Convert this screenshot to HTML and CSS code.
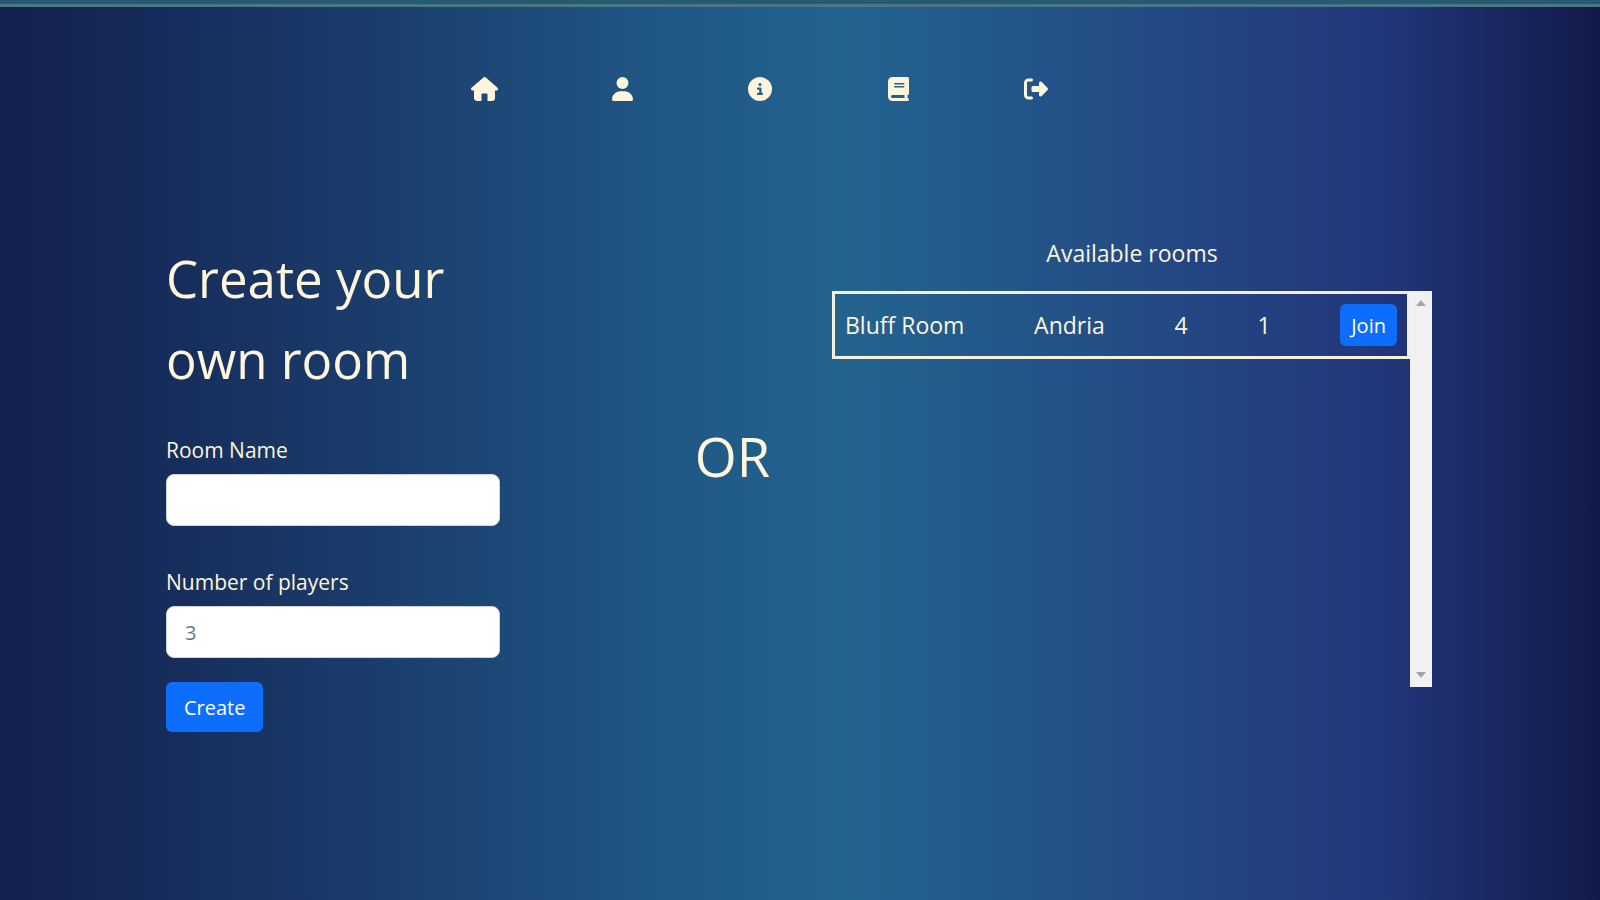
FILE: index.html
```
<!DOCTYPE html>
<html lang="en">

<head>
    <meta charset="UTF-8">
    <meta name="viewport" content="width=device-width, initial-scale=1.0">
    <title>Rooms</title>
    <link rel="stylesheet" href="styles.css">
</head>

<body>
    <div class="topline"></div>
    <nav>
        <a href="#home" aria-label="Home">
            <svg viewBox="0 0 576 512"><path d="M575.8 255.5c0 18-15 32.100-32 32.100h-32l.7 160.200c0 35.300-28.700 64.200-64 64.200H352V376c0-13-11-24-24-24h-80c-13 0-24 11-24 24v136H128c-35 0-64-29-64-64V287.600H32c-18 0-32-14-32-32.100 0-9 3-17 10-24L266.400 8c7-7 15-8 22-8s15 2 21 7L564.800 231.500c8 7 12 15 11 24z"/></svg>
        </a>
        <a href="#profile" aria-label="Profile">
            <svg viewBox="0 0 448 512"><path d="M224 256a128 128 0 1 0 0-256 128 128 0 1 0 0 256zM178 304C79 304 0 383 0 482c0 17 13 30 30 30h388c17 0 30-13 30-30 0-99-79-178-178-178z"/></svg>
        </a>
        <a href="#info" aria-label="Info">
            <svg viewBox="0 0 512 512"><path fill-rule="evenodd" d="M256 512a256 256 0 1 0 0-512 256 256 0 1 0 0 512zM216 336h24v-64h-24c-13 0-24-11-24-24s11-24 24-24h48c13 0 24 11 24 24v88h8c13 0 24 11 24 24s-11 24-24 24h-80c-13 0-24-11-24-24s11-24 24-24zm40-208a32 32 0 1 1 0 64 32 32 0 1 1 0-64z"/></svg>
        </a>
        <a href="#rules" aria-label="Rules">
            <svg viewBox="0 0 448 512"><path fill-rule="evenodd" d="M96 0C43 0 0 43 0 96v320c0 53 43 96 96 96h320c18 0 32-14 32-32s-14-32-32-32v-64c18 0 32-14 32-32V32c0-18-14-32-32-32H96zm0 384h256v64H96c-18 0-32-14-32-32s14-32 32-32zm32-240c0-9 7-16 16-16h192c9 0 16 7 16 16s-7 16-16 16H144c-9 0-16-7-16-16zm16 48h192c9 0 16 7 16 16s-7 16-16 16H144c-9 0-16-7-16-16s7-16 16-16z"/></svg>
        </a>
        <a href="#logout" aria-label="Log out">
            <svg viewBox="0 0 512 512"><path d="M378 105l121 122c8 8 13 18 13 29s-5 21-13 29L378 407c-6 6-15 10-24 10-19 0-34-15-34-34v-63H192c-18 0-32-14-32-32v-64c0-18 14-32 32-32h128v-63c0-19 15-34 34-34 9 0 18 4 24 10zM160 96H96c-18 0-32 14-32 32v256c0 18 14 32 32 32h64c18 0 32 14 32 32s-14 32-32 32H96c-53 0-96-43-96-96V128c0-53 43-96 96-96h64c18 0 32 14 32 32s-14 32-32 32z"/></svg>
        </a>
    </nav>
    <main>
        <form class="create">
            <h1>Create your own room</h1>
            <div class="group">
                <label for="roomName">Room Name</label>
                <input type="text" id="roomName">
            </div>
            <div class="group">
                <label for="players">Number of players</label>
                <input type="text" id="players" placeholder="3">
            </div>
            <button type="button">Create</button>
        </form>
        <p class="or">OR</p>
        <section class="rooms">
            <h2>Available rooms</h2>
            <div class="list">
                <table>
                    <tbody>
                        <tr>
                            <td>Bluff Room</td>
                            <td>Andria</td>
                            <td>4</td>
                            <td>1</td>
                            <td><button type="button" class="join">Join</button></td>
                        </tr>
                    </tbody>
                </table>
                <!-- Scroll track -->
                <div class="track">
                    <svg viewBox="0 0 10 6"><path d="M0 6L5 0l5 6z"/></svg>
                    <svg viewBox="0 0 10 6"><path d="M0 0l5 6 5-6z"/></svg>
                </div>
            </div>
        </section>
    </main>
</body>

</html>
```
FILE: styles.css
```
* {
    box-sizing: border-box;
}

body {
    margin: 0;
    min-height: 100vh;
    color: #fdf5dc;
    font-family: "Segoe UI", "Open Sans", sans-serif;
    font-size: 21px;
    background: linear-gradient(90deg, #14204e 0%, #1a3c6b 23%, #205583 40%, #23648f 53%, #235589 64%, #23377c 86%, #121a48 100%);
}

.topline {
    height: 7px;
    background-color: #275a70;
    border-bottom: 3px solid #4a7787;
}

nav {
    display: flex;
    justify-content: center;
    gap: 110px;
    padding: 70px 80px 0 0;
}

nav a {
    display: flex;
    justify-content: center;
    width: 28px;
    height: 24px;
}

nav svg {
    height: 100%;
    fill: #fdf5dc;
}

main {
    display: grid;
    grid-template-columns: 334fr 332fr 600fr;
    padding: 134px 168px 0 166px;
}

h1,
h2,
p {
    margin: 0;
    font-weight: 400;
}

/* Create form */
h1 {
    font-size: 51px;
    line-height: 81px;
    margin-bottom: 34px;
}

.group {
    margin-bottom: 40px;
}

.group + .group {
    margin-bottom: 24px;
}

label {
    display: block;
    line-height: 32px;
    margin-bottom: 8px;
}

input {
    display: block;
    width: 100%;
    height: 52px;
    padding: 0 18px;
    border: 1px solid #ced4da;
    border-radius: 8px;
    background-color: #fff;
    font: inherit;
    font-size: 20px;
}

input::placeholder {
    color: #6c757d;
    opacity: 1;
}

button {
    height: 50px;
    padding: 0 18px;
    border: 0;
    border-radius: 6px;
    color: #fff;
    background-color: #0d6efd;
    font: inherit;
    font-size: 20px;
    cursor: pointer;
}

.or {
    padding: 181px 62px 0 0;
    font-size: 54px;
    line-height: 81px;
    text-align: right;
}

.create {
    padding-top: 3px;
}

/* Rooms */
.rooms {
    font-size: 23px;
}

h2 {
    font-size: 23px;
    line-height: 36px;
    margin-bottom: 20px;
    text-align: center;
}

.list {
    display: flex;
    align-items: flex-start;
    height: 396px;
}

table {
    flex: 1;
    display: block;
    border: 3px solid #f4f0dc;
}

tbody {
    display: block;
}

tr {
    display: flex;
    justify-content: space-between;
    align-items: center;
    height: 62px;
    padding: 0 10px;
}

td {
    padding: 0;
}

.join {
    display: block;
    height: 42px;
    padding: 0 11px;
}

.track {
    display: flex;
    flex-direction: column;
    justify-content: space-between;
    align-items: center;
    width: 22px;
    height: 100%;
    padding: 9px 0;
    background-color: #f1f1f1;
}

.track svg {
    width: 10px;
    fill: #a3a3a3;
}
```
